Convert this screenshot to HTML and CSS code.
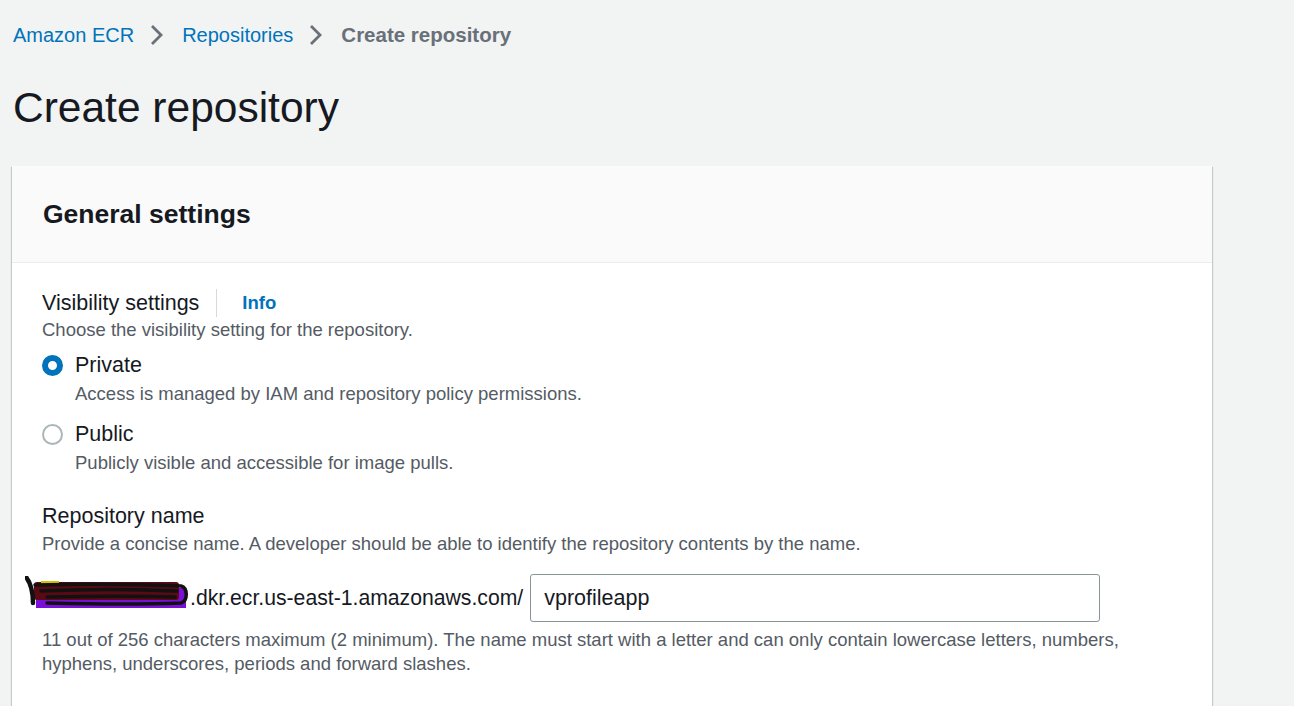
FILE: index.html
```html
<!DOCTYPE html>
<html lang="en">
<head>
<meta charset="utf-8">
<title>Create repository</title>
<link rel="stylesheet" href="styles.css">
</head>
<body>
<div class="page">
  <nav class="crumbs">
    <a class="crumb-link" href="#">Amazon ECR</a>
    <svg class="chev" width="13" height="22" viewBox="0 0 13 22"><path d="M2 2 L11 11 L2 20" fill="none" stroke="#687078" stroke-width="2.8"/></svg>
    <a class="crumb-link" href="#">Repositories</a>
    <svg class="chev" width="13" height="22" viewBox="0 0 13 22"><path d="M2 2 L11 11 L2 20" fill="none" stroke="#687078" stroke-width="2.8"/></svg>
    <span class="crumb-current">Create repository</span>
  </nav>
  <h1 class="title">Create repository</h1>
  <section class="panel">
    <header class="panel-head"><h2>General settings</h2></header>
    <div class="panel-body">
      <div class="field-label">
        <span>Visibility settings</span>
        <span class="sep"></span>
        <a class="info" href="#">Info</a>
      </div>
      <div class="desc">Choose the visibility setting for the repository.</div>
      <div class="radio-group">
        <div class="radio">
          <span class="dot dot-on"></span>
          <div class="radio-text">
            <div class="radio-label">Private</div>
            <div class="desc">Access is managed by IAM and repository policy permissions.</div>
          </div>
        </div>
        <div class="radio radio-2">
          <span class="dot"></span>
          <div class="radio-text">
            <div class="radio-label">Public</div>
            <div class="desc">Publicly visible and accessible for image pulls.</div>
          </div>
        </div>
      </div>
      <div class="field-label field-gap">Repository name</div>
      <div class="desc desc-name">Provide a concise name. A developer should be able to identify the repository contents by the name.</div>
      <div class="name-row">
        <svg class="redact" width="166" height="44" viewBox="0 0 166 44">
          <rect x="11" y="12" width="150" height="20" fill="#7a10d8"/>
          <rect x="9" y="6" width="145" height="18" rx="3" fill="#5a0a14"/>
          <rect x="16" y="5" width="18" height="3" fill="#d8c000"/>
          <path d="M1 1 C5 6 8 14 8 27" fill="none" stroke="#111" stroke-width="4.5" stroke-linecap="round"/>
          <path d="M10 9 C50 8 110 8 156 10 C163 12 163 25 156 27 C110 29 60 28 22 27 M16 15 C60 13 110 13 152 15 M22 21 C70 20 120 20 150 21" fill="none" stroke="#111" stroke-width="3.5" stroke-linecap="round"/>
        </svg>
        <span class="prefix">.dkr.ecr.us-east-1.amazonaws.com/</span>
        <div class="input">vprofileapp</div>
      </div>
      <div class="help">11 out of 256 characters maximum (2 minimum). The name must start with a letter and can only contain lowercase letters, numbers, hyphens, underscores, periods and forward slashes.</div>
    </div>
  </section>
</div>
</body>
</html>
```
FILE: styles.css
```css
* { box-sizing: border-box; }
html, body { margin: 0; padding: 0; }
body {
  background: #f2f3f3;
  font-family: "Liberation Sans", Arial, sans-serif;
  color: #16191f;
  height: 706px;
  overflow: hidden;
}
.page { padding: 21px 0 0 12px; }
.crumbs {
  display: flex;
  align-items: center;
  height: 28px;
  font-size: 20px;
  padding-left: 1px;
}
.crumb-link { color: #0073bb; text-decoration: none; }
.chev { margin: 0 19px 0 16px; display: block; }
.crumb-current { color: #687078; font-weight: bold; font-size: 20.5px; }
.title {
  margin: 34px 0 0 0;
  height: 50px;
  line-height: 50px;
  font-size: 42.5px;
  font-weight: normal;
  padding-left: 1px;
  color: #16191f;
}
.panel {
  width: 1200px;
  margin-top: 33px;
  background: #fff;
  box-shadow: 0 1px 1px 0 rgba(0,28,36,.3), 1px 1px 1px 0 rgba(0,28,36,.15), -1px 1px 1px 0 rgba(0,28,36,.15);
}
.panel-head {
  height: 97px;
  background: #fafafa;
  border-bottom: 1px solid #eaeded;
  display: flex;
  align-items: center;
  padding-left: 31px;
}
.panel-head h2 { margin: 0; font-size: 26.5px; font-weight: bold; color: #16191f; }
.panel-body { padding: 25px 30px 40px 30px; }
.field-label {
  display: flex;
  align-items: center;
  font-size: 21.5px;
  line-height: 30px;
  height: 30px;
}
.sep { width: 1px; height: 28px; background: #d5dbdb; margin: 0 25px 0 17px; }
.info { color: #0073bb; font-weight: bold; font-size: 18.5px; text-decoration: none; }
.desc { font-size: 18.5px; line-height: 24px; color: #545b64; }
.radio-group { margin-top: 8px; }
.radio { display: flex; align-items: flex-start; }
.radio-2 { margin-top: 13px; }
.dot {
  width: 21px; height: 21px; border-radius: 50%;
  border: 2px solid #aab7b8; background: #fff;
  margin-top: 5px; flex: none;
}
.dot-on { border: 6.5px solid #0073bb; }
.radio-text { margin-left: 12px; }
.radio-label { font-size: 21.5px; line-height: 30px; height: 30px; }
.radio-label + .desc { margin-top: 2px; }
.field-gap { margin-top: 26px; }
.desc-name { margin-top: 1px; }
.name-row {
  display: flex;
  align-items: center;
  margin-top: 18px;
  margin-left: -17px;
}
.redact { flex: none; display: block; }
.prefix { font-size: 21.2px; color: #16191f; margin-left: -1px; }
.input {
  margin-left: 7px;
  width: 570px;
  height: 48px;
  border: 1px solid #879596;
  border-radius: 3px;
  font-size: 21.5px;
  line-height: 46px;
  padding-left: 13px;
  background: #fff;
}
.help { margin-top: 6px; font-size: 18.5px; line-height: 24px; color: #545b64; }
```
